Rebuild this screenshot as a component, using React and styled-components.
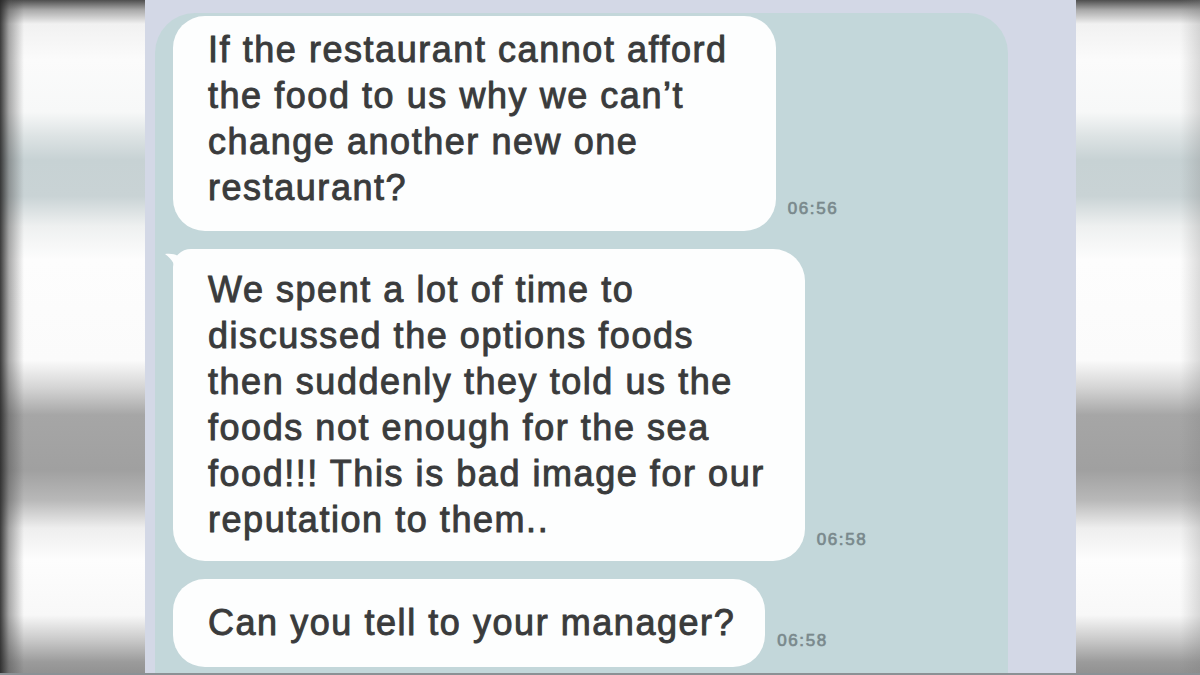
import React from "react";
import styled, { createGlobalStyle, css } from "styled-components";

const GlobalStyle = createGlobalStyle`
  html, body {
    margin: 0;
    padding: 0;
    background: #fafafa;
  }
  body {
    width: 1200px;
    height: 675px;
    overflow: hidden;
    font-family: "Liberation Sans", Arial, Helvetica, sans-serif;
  }
  * { box-sizing: border-box; }
`;

const Stage = styled.div`
  display: grid;
  grid-template-columns: 145px 931px 1fr;
  width: 1200px;
  height: 675px;
  border-bottom: 2px solid #8b9195;
`;

/* Soft, out-of-focus fill that flanks the conversation */
const Backdrop = styled.div`
  height: 100%;
  background:
    ${({ $side }) =>
      $side === "left"
        ? "linear-gradient(to right, rgba(38,38,38,0.9) 0, rgba(70,70,70,0.45) 9px, rgba(255,255,255,0) 24px),"
        : "linear-gradient(to left, rgba(120,120,120,0.25) 0, rgba(255,255,255,0) 20px),"}
    linear-gradient(
      to bottom,
      #4e4e4e 0,
      #a9a9a9 10px,
      #f1f1f1 24px,
      #fbfbfb 60px,
      #f7f8f8 112px,
      #dde3e4 136px,
      #c7d2d4 160px,
      #c9d3d5 196px,
      #eef0f0 226px,
      #fdfdfd 260px,
      #fbfbfb 360px,
      #d4d4d4 388px,
      #a6a6a6 415px,
      #a0a0a0 470px,
      #b8b8b8 500px,
      #eeeeee 528px,
      #fdfdfd 560px,
      #f8f8f8 615px,
      #c9c9c9 640px,
      #9b9b9b 662px,
      #909090 675px
    );
`;

const Panel = styled.div`
  display: flex;
  flex-direction: column;
  height: 100%;
  padding: 13px 68px 0 10px;
  background: #d3d8e6;
`;

const ChatArea = styled.div`
  flex: 1;
  display: flex;
  flex-direction: column;
  gap: 18px;
  padding: 3px 0 0 18px;
  background: #c3d7da;
  border-radius: 40px 40px 0 0;
  overflow: hidden;
`;

const Row = styled.div`
  display: flex;
  align-items: flex-end;
  gap: 12px;
`;

const Bubble = styled.div`
  position: relative;
  padding: ${({ $pad }) => $pad.join("px ")}px;
  background: #fdfefe;
  border-radius: 32px;
  color: #3a3b3c;
  font-size: 36px;
  line-height: 46px;
  letter-spacing: 1.55px;
  -webkit-text-stroke: 0.8px #3a3b3c;
  text-shadow: 0 0 1px rgba(58, 59, 60, 0.55);
  white-space: pre-line;
  ${({ $tail }) =>
    $tail &&
    css`
      border-top-left-radius: 18px;
    `}
`;

const Tail = styled.svg`
  position: absolute;
  left: -9px;
  top: 2px;
  width: 22px;
  height: 26px;
`;

const Time = styled.span`
  margin-bottom: ${({ $lift }) => $lift}px;
  color: #7a898d;
  font-size: 17px;
  line-height: 19px;
  letter-spacing: 1.6px;
  -webkit-text-stroke: 0.5px #7a898d;
  text-shadow: 0 0 1px rgba(122, 137, 141, 0.6);
`;

const messages = [
  {
    text: "If the restaurant cannot afford\nthe food to us why we can’t\nchange another new one\nrestaurant?",
    time: "06:56",
    pad: [11, 48, 20, 35],
    lift: 13,
  },
  {
    text: "We spent a lot of time to\ndiscussed the options foods\nthen suddenly they told us the\nfoods not enough for the sea\nfood!!! This is bad image for our\nreputation to them..",
    time: "06:58",
    pad: [18, 40, 18, 35],
    lift: 12,
    tail: true,
  },
  {
    text: "Can you tell to your manager?",
    time: "06:58",
    pad: [21, 30, 21, 35],
    lift: 17,
  },
];

export default function App() {
  return (
    <>
      <GlobalStyle />
      <Stage>
        <Backdrop $side="left" />
        <Panel>
          <ChatArea>
            {messages.map((m, i) => (
              <Row key={i}>
                <Bubble $pad={m.pad} $tail={m.tail}>
                  {m.tail && (
                    <Tail viewBox="0 0 22 26" aria-hidden="true">
                      <path d="M1 3 C 6 2 12 3 16 6 L 22 6 L 22 26 L 14 26 C 13 16 8 8 1 3 Z" fill="#fdfefe" />
                    </Tail>
                  )}
                  {m.text}
                </Bubble>
                <Time $lift={m.lift}>{m.time}</Time>
              </Row>
            ))}
          </ChatArea>
        </Panel>
        <Backdrop $side="right" />
      </Stage>
    </>
  );
}
